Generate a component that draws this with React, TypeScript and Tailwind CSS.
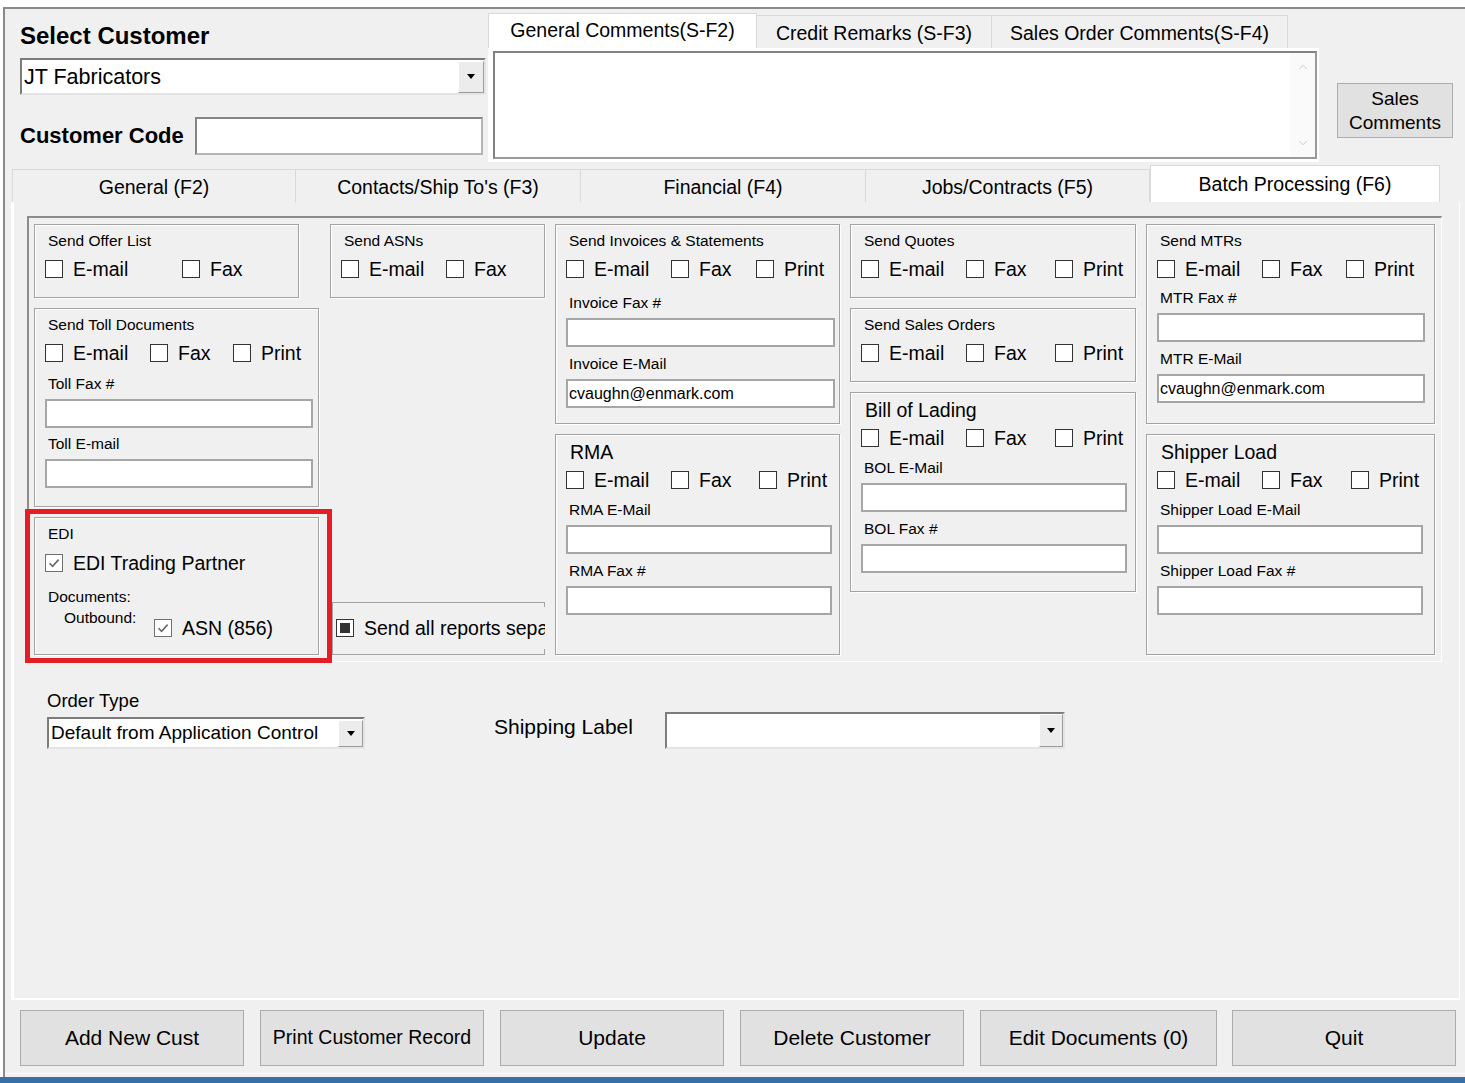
import React from 'react';
import { ChevronUp, ChevronDown } from 'lucide-react';
import { clsx, type ClassValue } from 'clsx';
import { twMerge } from 'tailwind-merge';

function cn(...inputs: ClassValue[]) {
  return twMerge(clsx(inputs));
}

type CheckState = 'off' | 'on' | 'mixed';

const CheckBox = ({ state = 'off' }: { state?: CheckState }) => (
  <span
    className={cn(
      'flex w-[18px] h-[18px] shrink-0 items-center justify-center border bg-white',
      state === 'on' ? 'border-[#707070]' : 'border-[#333333]'
    )}
  >
    {state === 'on' && (
      <svg width="14" height="14" viewBox="0 0 14 14">
        <path d="M2.5 7.2 L5.6 10.3 L11.6 3.6" fill="none" stroke="#686868" strokeWidth="1.6" />
      </svg>
    )}
    {state === 'mixed' && <span className="w-[10px] h-[10px] bg-[#333333]" />}
  </span>
);

const Option = ({ label, state, className }: { label: string; state?: CheckState; className?: string }) => (
  <div className={cn('flex h-[18px] items-center', className)}>
    <CheckBox state={state} />
    <span className="ml-[10px] text-[19.5px] leading-[18px] whitespace-nowrap">{label}</span>
  </div>
);

// E-mail / Fax / Print row, widths are the distance from one box to the next
const Options = ({ w1, w2, print = true }: { w1: string; w2?: string; print?: boolean }) => (
  <div className="flex items-center pl-[10px]">
    <Option label="E-mail" className={w1} />
    <Option label="Fax" className={w2} />
    {print && <Option label="Print" />}
  </div>
);

const Group = ({ className, children }: { className?: string; children?: React.ReactNode }) => (
  <div className={cn('border border-[#a3a3a3] shadow-[inset_1px_1px_0_#ffffff,1px_1px_0_#ffffff]', className)}>
    {children}
  </div>
);

const SmallTitle = ({ children }: { children: React.ReactNode }) => (
  <div className="mt-[7px] pl-[13px] text-[15.5px] leading-[18px]">{children}</div>
);

const BigTitle = ({ children }: { children: React.ReactNode }) => (
  <div className="mt-[5px] pl-[14px] text-[19.5px] leading-[24px]">{children}</div>
);

const Field = ({ label, value, gap, w }: { label: string; value?: string; gap: string; w: string }) => (
  <>
    <div className={cn('pl-[13px] text-[15.5px] leading-[18px]', gap)}>{label}</div>
    <div
      className={cn(
        'ml-[10px] mt-[6px] h-[29px] border-2 border-[#a6a6a6] bg-white pl-[1px] text-[16px] leading-[25px] whitespace-nowrap',
        w
      )}
    >
      {value}
    </div>
  </>
);

const DropBtn = ({ className }: { className?: string }) => (
  <div
    className={cn(
      'flex shrink-0 items-center justify-center bg-[#ececec] border border-t-white border-l-white border-r-[#9c9c9c] border-b-[#9c9c9c]',
      className
    )}
  >
    <svg width="8" height="5" viewBox="0 0 8 5">
      <path d="M0 0H8L4 5Z" fill="#000" />
    </svg>
  </div>
);

const sunken = 'border-2 border-t-[#7c7c7c] border-l-[#7c7c7c] border-r-[#e4e4e4] border-b-[#e4e4e4] bg-white';

const mainTabs = [
  { label: 'General (F2)', w: 'w-[284px]' },
  { label: "Contacts/Ship To's (F3)", w: 'w-[285px]' },
  { label: 'Financial (F4)', w: 'w-[285px]' },
  { label: 'Jobs/Contracts (F5)', w: 'w-[284px]' },
];

const buttons = [
  { label: 'Add New Cust', cls: 'w-[224px]' },
  { label: 'Print Customer Record', cls: 'w-[224px] ml-[16px] text-[19.5px]' },
  { label: 'Update', cls: 'w-[224px] ml-[16px]' },
  { label: 'Delete Customer', cls: 'w-[224px] ml-[16px]' },
  { label: 'Edit Documents (0)', cls: 'w-[237px] ml-[16px]' },
  { label: 'Quit', cls: 'w-[224px] ml-[15px]' },
];

export default function App() {
  return (
    <div className="w-[1465px] h-[1083px] bg-white flex flex-col overflow-hidden font-['Liberation_Sans',Arial,sans-serif] text-black">
      <div className="h-[7px] shrink-0" />
      <div className="flex-1 min-h-0 ml-[3px] border-t-2 border-l-2 border-[#8a8a8a] bg-[#f0f0f0] flex flex-col">
        {/* customer header */}
        <div className="flex h-[156px] shrink-0">
          <div className="ml-[15px] w-[466px] pt-[14px]">
            <div className="text-[24px] font-bold leading-[26px]">Select Customer</div>
            <div className={cn('mt-[9px] h-[37px] flex items-center', sunken)}>
              <span className="flex-1 pl-[2px] text-[21.5px] leading-[26px]">JT Fabricators</span>
              <DropBtn className="w-[26px] h-[32px]" />
            </div>
            <div className="mt-[22px] flex items-center h-[38px]">
              <span className="w-[175px] text-[22px] font-bold leading-[26px]">Customer Code</span>
              <div className="w-[288px] h-[38px] border-2 border-t-[#858585] border-l-[#858585] border-r-[#b5b5b5] border-b-[#b5b5b5] bg-white" />
            </div>
          </div>

          <div className="ml-[2px] w-[831px] flex flex-col">
            <div className="h-[39px] flex items-end">
              <div className="w-[269px] h-[35px] bg-white border border-b-0 border-[#d9d9d9] flex items-center justify-center text-[19.5px]">
                General Comments(S-F2)
              </div>
              <div className="w-[235px] h-[33px] border-t border-r border-[#d9d9d9] flex items-center justify-center pt-[4px] text-[19.5px]">
                Credit Remarks (S-F3)
              </div>
              <div className="w-[296px] h-[33px] border-t border-r border-[#d9d9d9] flex items-center justify-center pt-[4px] text-[19.5px]">
                Sales Order Comments(S-F4)
              </div>
            </div>
            <div className="h-[114px] bg-white pl-[5px] pr-[2px] pt-[3px]">
              <div className="h-[108px] border-2 border-t-[#828282] border-l-[#828282] border-r-[#9a9a9a] border-b-[#9a9a9a] flex justify-end">
                <div className="w-[25px] flex flex-col items-center justify-between py-[7px] bg-[#fafafa]">
                  <ChevronUp size={14} strokeWidth={1.5} color="#c4c4c4" />
                  <ChevronDown size={14} strokeWidth={1.5} color="#c4c4c4" />
                </div>
              </div>
            </div>
          </div>

          <div className="ml-[18px] mt-[74px] w-[116px] h-[55px] bg-[#e1e1e1] border border-[#adadad] flex flex-col items-center justify-center text-[19px] leading-[24px]">
            <span>Sales</span>
            <span>Comments</span>
          </div>
        </div>

        {/* main tabs */}
        <div className="ml-[7px] h-[37px] shrink-0 flex items-end">
          {mainTabs.map((t) => (
            <div
              key={t.label}
              className={cn(
                'h-[33px] border-t border-r border-[#d9d9d9] flex items-center justify-center pt-[3px] text-[19.5px] first:border-l',
                t.w
              )}
            >
              {t.label}
            </div>
          ))}
          <div className="w-[290px] h-[37px] bg-white border border-b-0 border-[#d9d9d9] flex items-center justify-center pt-[2px] text-[19.5px]">
            Batch Processing (F6)
          </div>
        </div>

        {/* batch processing page */}
        <div className="ml-[6px] w-[1449px] h-[798px] shrink-0 border-l-[3px] border-b-2 border-r border-white pt-[14px] pl-[13px]">
          <div className="w-[1415px] h-[446px] border-t-2 border-l-2 border-r border-b border-[#8c8c8c] border-r-white border-b-white pt-[6px] pl-[5px] flex gap-[10px]">
            {/* left block */}
            <div className="w-[511px]">
              <div className="flex">
                <Group className="w-[265px] h-[74px]">
                  <SmallTitle>Send Offer List</SmallTitle>
                  <div className="mt-[10px]">
                    <Options w1="w-[137px]" print={false} />
                  </div>
                </Group>
                <Group className="ml-[31px] w-[215px] h-[74px]">
                  <SmallTitle>Send ASNs</SmallTitle>
                  <div className="mt-[10px]">
                    <Options w1="w-[105px]" print={false} />
                  </div>
                </Group>
              </div>
              <div className="mt-[10px] flex items-end">
                <div className="w-[286px]">
                  <Group className="h-[199px]">
                    <SmallTitle>Send Toll Documents</SmallTitle>
                    <div className="mt-[10px]">
                      <Options w1="w-[105px]" w2="w-[83px]" />
                    </div>
                    <Field label="Toll Fax #" gap="mt-[13px]" w="w-[268px]" />
                    <Field label="Toll E-mail" gap="mt-[7px]" w="w-[268px]" />
                  </Group>
                  <div className="relative mt-[10px]">
                    <Group className="h-[138px]">
                      <SmallTitle>EDI</SmallTitle>
                      <div className="mt-[11px] pl-[10px]">
                        <Option state="on" label="EDI Trading Partner" />
                      </div>
                      <div className="mt-[16px] pl-[13px] text-[15.5px] leading-[18px]">Documents:</div>
                      <div className="mt-[3px] flex items-start">
                        <div className="ml-[29px] w-[90px] text-[15.5px] leading-[18px]">Outbound:</div>
                        <Option className="mt-[10px]" state="on" label="ASN (856)" />
                      </div>
                    </Group>
                    <div className="absolute -left-[9px] -top-[8px] w-[307px] h-[154px] border-[5px] border-[#e31e24]" />
                  </div>
                </div>
                <div className="ml-[13px] w-[213px] h-[53px] border border-[#a3a3a3] pt-[4px] pl-[3px]">
                  <div className="h-[42px] -mr-px bg-[#f0f0f0] flex items-center overflow-hidden">
                    <CheckBox state="mixed" />
                    <span className="ml-[10px] whitespace-nowrap text-[19.5px] leading-[22px]">
                      Send all reports separately
                    </span>
                  </div>
                </div>
              </div>
            </div>

            {/* invoices / rma */}
            <div className="w-[285px]">
              <Group className="h-[200px]">
                <SmallTitle>Send Invoices &amp; Statements</SmallTitle>
                <div className="mt-[10px]">
                  <Options w1="w-[105px]" w2="w-[85px]" />
                </div>
                <Field label="Invoice Fax #" gap="mt-[16px]" w="w-[269px]" />
                <Field label="Invoice E-Mail" value="cvaughn@enmark.com" gap="mt-[7.5px]" w="w-[269px]" />
              </Group>
              <Group className="mt-[10px] h-[221px]">
                <BigTitle>RMA</BigTitle>
                <div className="mt-[7px]">
                  <Options w1="w-[105px]" w2="w-[88px]" />
                </div>
                <Field label="RMA E-Mail" gap="mt-[12px]" w="w-[266px]" />
                <Field label="RMA Fax #" gap="mt-[7.5px]" w="w-[266px]" />
              </Group>
            </div>

            {/* quotes / sales orders / bol */}
            <div className="w-[286px]">
              <Group className="h-[74px]">
                <SmallTitle>Send Quotes</SmallTitle>
                <div className="mt-[10px]">
                  <Options w1="w-[105px]" w2="w-[89px]" />
                </div>
              </Group>
              <Group className="mt-[10px] h-[74px]">
                <SmallTitle>Send Sales Orders</SmallTitle>
                <div className="mt-[10px]">
                  <Options w1="w-[105px]" w2="w-[89px]" />
                </div>
              </Group>
              <Group className="mt-[10px] h-[200px]">
                <BigTitle>Bill of Lading</BigTitle>
                <div className="mt-[7px]">
                  <Options w1="w-[105px]" w2="w-[89px]" />
                </div>
                <Field label="BOL E-Mail" gap="mt-[12px]" w="w-[266px]" />
                <Field label="BOL Fax #" gap="mt-[7.5px]" w="w-[266px]" />
              </Group>
            </div>

            {/* mtrs / shipper load */}
            <div className="w-[289px]">
              <Group className="h-[200px]">
                <SmallTitle>Send MTRs</SmallTitle>
                <div className="mt-[10px]">
                  <Options w1="w-[105px]" w2="w-[84px]" />
                </div>
                <Field label="MTR Fax #" gap="mt-[11px]" w="w-[268px]" />
                <Field label="MTR E-Mail" value="cvaughn@enmark.com" gap="mt-[7.5px]" w="w-[268px]" />
              </Group>
              <Group className="mt-[10px] h-[221px]">
                <BigTitle>Shipper Load</BigTitle>
                <div className="mt-[7px]">
                  <Options w1="w-[105px]" w2="w-[89px]" />
                </div>
                <Field label="Shipper Load E-Mail" gap="mt-[12px]" w="w-[266px]" />
                <Field label="Shipper Load Fax #" gap="mt-[7.5px]" w="w-[266px]" />
              </Group>
            </div>
          </div>

          {/* order type / shipping label */}
          <div className="mt-[28px] flex items-start">
            <div className="ml-[20px] w-[318px]">
              <div className="text-[18.5px] leading-[22px]">Order Type</div>
              <div className={cn('mt-[5px] h-[32px] flex items-center', sunken)}>
                <span className="flex-1 pl-[2px] text-[19px] leading-[22px] whitespace-nowrap overflow-hidden">
                  Default from Application Control
                </span>
                <DropBtn className="w-[25px] h-[27px]" />
              </div>
            </div>
            <div className="ml-[129px] mt-[22px] flex items-start">
              <div className="w-[171px] mt-[3px] text-[21px] leading-[24px]">Shipping Label</div>
              <div className={cn('w-[400px] h-[37px] flex items-center justify-end', sunken)}>
                <DropBtn className="w-[24px] h-[33px]" />
              </div>
            </div>
          </div>
        </div>

        {/* bottom buttons */}
        <div className="mt-[9.5px] ml-[15px] h-[56px] shrink-0 flex">
          {buttons.map((b) => (
            <div
              key={b.label}
              className={cn(
                'h-[56px] bg-[#e1e1e1] border border-[#adadad] flex items-center justify-center text-[21px] whitespace-nowrap',
                b.cls
              )}
            >
              {b.label}
            </div>
          ))}
        </div>
        <div className="mt-auto mb-[3px] h-px bg-[#fbfbfb]" />
      </div>
      <div className="h-[6px] shrink-0 bg-[#3a6ea5]" />
    </div>
  );
}
